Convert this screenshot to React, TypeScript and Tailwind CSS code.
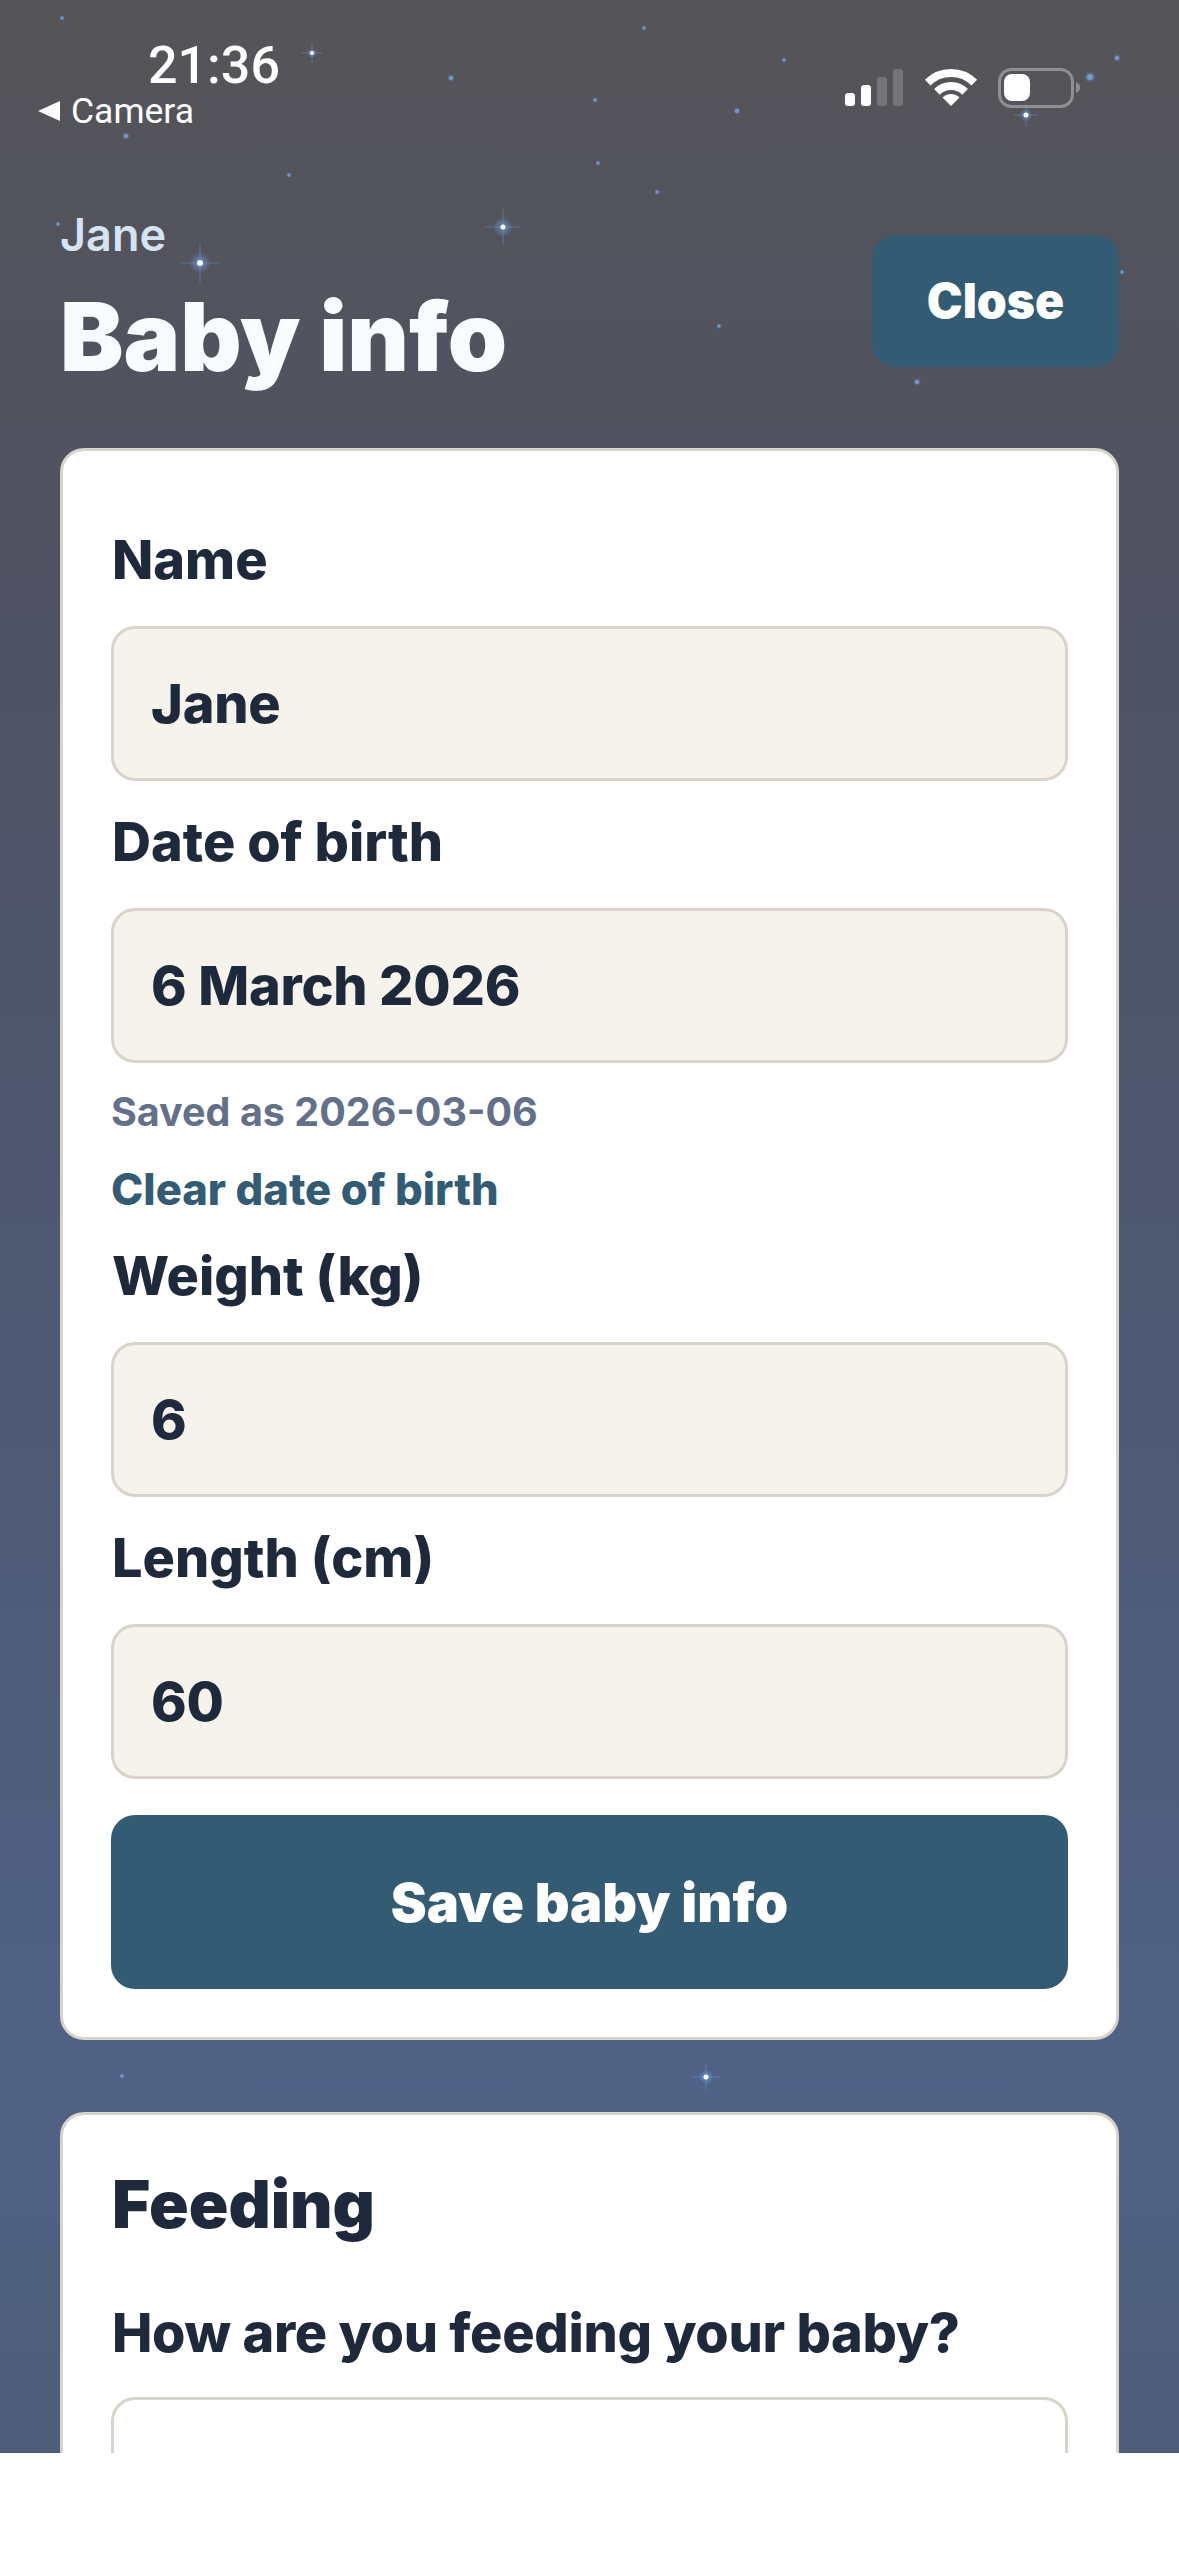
import React from 'react';

// x, y, radius, arm length (px in the 1179 wide screenshot), arm 0 means a plain dim dot
const stars: [number, number, number, number][] = [
  [62, 18, 1.5, 0], [126, 136, 2, 0], [58, 224, 1.5, 0], [312, 53, 2, 10], [451, 78, 2, 0], [289, 175, 1.5, 0],
  [503, 227, 2.5, 18], [200, 263, 3, 20], [598, 163, 1.5, 0], [644, 28, 1.5, 0], [737, 111, 2, 0],
  [657, 192, 1.5, 0], [719, 326, 1.5, 0], [917, 382, 2, 0], [1026, 115, 2.5, 12], [1090, 77, 3, 0], [1117, 58, 2, 0],
  [784, 60, 1.5, 0], [1122, 272, 1.5, 0], [122, 2076, 1.5, 0], [706, 2077, 2.5, 14], [595, 100, 1.5, 0],
];

const Field = ({ label, value }: { label: string; value: string }) => (
  <div>
    <div className="mt-[20px] mb-[26px] pl-[1px] text-[54px] leading-[81px] font-extrabold text-[#1e293b]">{label}</div>
    <div className="flex h-[155px] items-center rounded-[24px] border-[3px] border-[#d8d4c9] bg-[#f6f3ec] px-[37px] text-[54px] font-extrabold tracking-[-0.2px] text-[#1e293b]">
      {value}
    </div>
  </div>
);

export default function App() {
  return (
    <div className="min-h-[2556px] w-[1179px] bg-white font-[Inter,sans-serif]">
      <div className="relative h-[2453px] overflow-hidden bg-[linear-gradient(180deg,#555458_0%,#4f5263_25%,#4e5a76_60%,#506285_85%,#4e5d79_100%)]">
        <svg className="absolute inset-0" width="1179" height="2453">
          <defs>
            <radialGradient id="glow">
              <stop offset="0%" stopColor="#6f9be0" stopOpacity="0.8" />
              <stop offset="100%" stopColor="#6f9be0" stopOpacity="0" />
            </radialGradient>
          </defs>
          {stars.map(([x, y, r, g], i) => (
            <g key={i}>
              <circle cx={x} cy={y} r={g ? g * 0.55 : r * 2} fill="url(#glow)" />
              {g > 0 && <path d={`M${x - g} ${y}H${x + g}M${x} ${y - g}V${y + g}`} stroke="#6f9be0" strokeWidth="1" opacity="0.45" />}
              <circle cx={x} cy={y} r={r} fill={g ? '#ffffff' : '#7f9fd6'} opacity={g ? 1 : 0.8} />
            </g>
          ))}
        </svg>

        <div className="relative flex flex-col">
          {/* status bar */}
          <div className="flex h-[190px] justify-between pl-[38px] pr-[98px] text-white">
            <div>
              <div className="ml-[110px] mt-[35px] font-[Roboto,sans-serif] text-[52px] leading-[62px] font-medium">21:36</div>
              <div className="flex items-center gap-[11px] font-[Roboto,sans-serif] text-[35.5px] leading-[28px]">
                <svg width="22" height="20" viewBox="0 0 22 20"><path d="M0 10 22 0V20Z" fill="#fff" /></svg>
                Camera
              </div>
            </div>
            <svg className="mt-[68px]" width="236" height="40" viewBox="846 68 236 40">
              <rect x="846" y="93" width="10" height="13" rx="3" fill="#fff" />
              <rect x="862" y="85" width="10" height="21" rx="3" fill="#fff" />
              <rect x="878" y="77" width="10" height="29" rx="3" fill="#757579" />
              <rect x="894" y="69" width="10" height="37" rx="3" fill="#757579" />
              <path d="M928.7 82.7A33 33 0 0 1 975.3 82.7" fill="none" stroke="#fff" strokeWidth="8" />
              <path d="M937.9 91.9A20 20 0 0 1 966.1 91.9" fill="none" stroke="#fff" strokeWidth="8" />
              <path d="M952 106 943.5 97.5A12 12 0 0 1 960.5 97.5Z" fill="#fff" />
              <rect x="1000.5" y="69.5" width="73" height="37" rx="12" fill="none" stroke="#8f8f92" strokeWidth="3" />
              <rect x="1005" y="74" width="26" height="27" rx="8" fill="#fff" />
              <path d="M1077 82C1080 83 1081 85 1081 87.500C1081 90 1080 92 1077 93Z" fill="#8f8f92" />
            </svg>
          </div>

          {/* header */}
          <div className="flex items-start justify-between pl-[60px] pr-[60px]">
            <div>
              <div className="mt-[15px] text-[45px] leading-[60px] font-semibold text-[#d5e3f3]">Jane</div>
              <h1 className="mt-[17px] text-[95px] leading-[110px] font-black text-[#f8fbff]">Baby info</h1>
            </div>
            <button className="mt-[45px] h-[132px] w-[247px] rounded-[24px] bg-[#335c74] text-[48px] font-black text-white">Close</button>
          </div>

          {/* baby info card */}
          <div className="mx-[60px] mt-[56px] rounded-[24px] border-[3px] border-[#d7d4ca] bg-white p-[48px]">
            <Field label="Name" value="Jane" />
            <Field label="Date of birth" value="6 March 2026" />
            <div className="mt-[30px] text-[39.500px] leading-[38px] font-bold text-[#64708a]">Saved as 2026-03-06</div>
            <div className="mt-[39px] mb-[27px] text-[43.500px] leading-[38px] font-extrabold text-[#335c74]">Clear date of birth</div>
            <Field label="Weight (kg)" value="6" />
            <Field label="Length (cm)" value="60" />
            <button className="mt-[36px] h-[174px] w-full rounded-[24px] bg-[#335c74] text-[54px] font-black text-white">Save baby info</button>
          </div>

          {/* feeding card */}
          <div className="mx-[60px] mt-[72px] rounded-[24px] border-[3px] border-[#d7d4ca] bg-white p-[48px]">
            <h2 className="pl-[1px] text-[65.500px] leading-[83px] font-black text-[#1e293b]">Feeding</h2>
            <div className="mt-[46px] mb-[24px] pl-[1px] text-[54px] leading-[81px] font-extrabold tracking-[-0.3px] text-[#1e293b]">How are you feeding your baby?</div>
            <div className="h-[155px] rounded-[24px] border-[3px] border-[#d7d4ca] bg-white" />
          </div>
        </div>
      </div>
    </div>
  );
}
